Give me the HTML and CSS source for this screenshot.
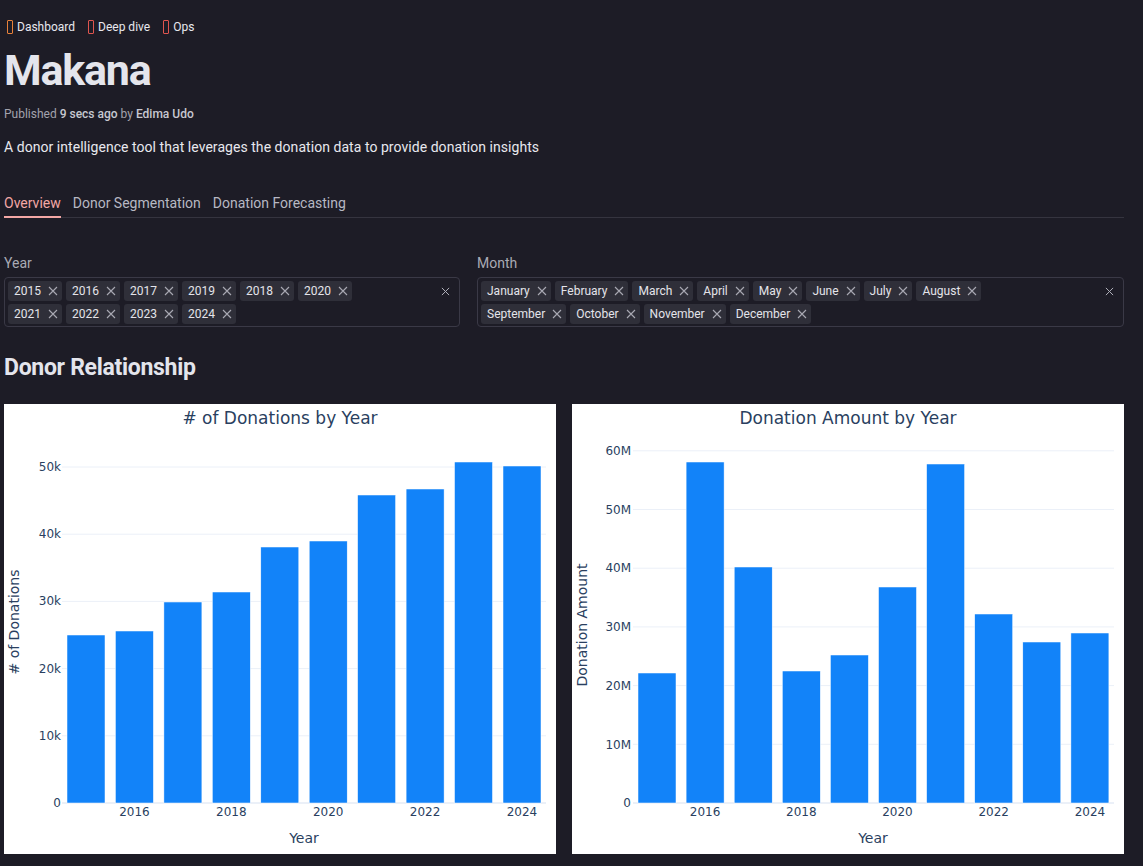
FILE: index.html
```html
<!DOCTYPE html>
<html lang="en">
<head>
<meta charset="utf-8">
<title>Makana</title>
<link rel="stylesheet" href="styles.css">
</head>
<body>
<div class="page">
  <nav class="nav">
    <a class="nav-link"><span class="glyph glyph-orange"></span>Dashboard</a>
    <a class="nav-link"><span class="glyph glyph-red"></span>Deep dive</a>
    <a class="nav-link"><span class="glyph glyph-red"></span>Ops</a>
  </nav>

  <h1 class="title">Makana</h1>
  <p class="meta">Published <b>9 secs ago</b> by <b>Edima Udo</b></p>
  <p class="desc">A donor intelligence tool that leverages the donation data to provide donation insights</p>

  <div class="tabs">
    <span class="tab tab-active">Overview</span>
    <span class="tab">Donor Segmentation</span>
    <span class="tab">Donation Forecasting</span>
  </div>

  <div class="filters">
    <div class="field field-year">
      <div class="label">Year</div>
      <div class="select">
        <div class="tags">
          <span class="tag">2015<svg class="x" viewBox="0 0 10 10"><path d="M1 1L9 9M9 1L1 9"/></svg></span>
          <span class="tag">2016<svg class="x" viewBox="0 0 10 10"><path d="M1 1L9 9M9 1L1 9"/></svg></span>
          <span class="tag">2017<svg class="x" viewBox="0 0 10 10"><path d="M1 1L9 9M9 1L1 9"/></svg></span>
          <span class="tag">2019<svg class="x" viewBox="0 0 10 10"><path d="M1 1L9 9M9 1L1 9"/></svg></span>
          <span class="tag">2018<svg class="x" viewBox="0 0 10 10"><path d="M1 1L9 9M9 1L1 9"/></svg></span>
          <span class="tag">2020<svg class="x" viewBox="0 0 10 10"><path d="M1 1L9 9M9 1L1 9"/></svg></span>
          <span class="tag">2021<svg class="x" viewBox="0 0 10 10"><path d="M1 1L9 9M9 1L1 9"/></svg></span>
          <span class="tag">2022<svg class="x" viewBox="0 0 10 10"><path d="M1 1L9 9M9 1L1 9"/></svg></span>
          <span class="tag">2023<svg class="x" viewBox="0 0 10 10"><path d="M1 1L9 9M9 1L1 9"/></svg></span>
          <span class="tag">2024<svg class="x" viewBox="0 0 10 10"><path d="M1 1L9 9M9 1L1 9"/></svg></span>
        </div>
        <svg class="clear" viewBox="0 0 10 10"><path d="M1 1L9 9M9 1L1 9"/></svg>
      </div>
    </div>
    <div class="field field-month">
      <div class="label">Month</div>
      <div class="select">
        <div class="tags">
          <span class="tag">January<svg class="x" viewBox="0 0 10 10"><path d="M1 1L9 9M9 1L1 9"/></svg></span>
          <span class="tag">February<svg class="x" viewBox="0 0 10 10"><path d="M1 1L9 9M9 1L1 9"/></svg></span>
          <span class="tag">March<svg class="x" viewBox="0 0 10 10"><path d="M1 1L9 9M9 1L1 9"/></svg></span>
          <span class="tag">April<svg class="x" viewBox="0 0 10 10"><path d="M1 1L9 9M9 1L1 9"/></svg></span>
          <span class="tag">May<svg class="x" viewBox="0 0 10 10"><path d="M1 1L9 9M9 1L1 9"/></svg></span>
          <span class="tag">June<svg class="x" viewBox="0 0 10 10"><path d="M1 1L9 9M9 1L1 9"/></svg></span>
          <span class="tag">July<svg class="x" viewBox="0 0 10 10"><path d="M1 1L9 9M9 1L1 9"/></svg></span>
          <span class="tag">August<svg class="x" viewBox="0 0 10 10"><path d="M1 1L9 9M9 1L1 9"/></svg></span>
          <span class="tag">September<svg class="x" viewBox="0 0 10 10"><path d="M1 1L9 9M9 1L1 9"/></svg></span>
          <span class="tag">October<svg class="x" viewBox="0 0 10 10"><path d="M1 1L9 9M9 1L1 9"/></svg></span>
          <span class="tag">November<svg class="x" viewBox="0 0 10 10"><path d="M1 1L9 9M9 1L1 9"/></svg></span>
          <span class="tag">December<svg class="x" viewBox="0 0 10 10"><path d="M1 1L9 9M9 1L1 9"/></svg></span>
        </div>
        <svg class="clear" viewBox="0 0 10 10"><path d="M1 1L9 9M9 1L1 9"/></svg>
      </div>
    </div>
  </div>

  <h2 class="section">Donor Relationship</h2>

  <div class="charts">
    <div class="chart">
      <svg class="plot" viewBox="0 0 552 450" width="552" height="450">
        <text class="ctitle" x="276" y="20" text-anchor="middle"># of Donations by Year</text>
        <g class="grid">
          <line x1="58" x2="542" y1="331.8" y2="331.8"/>
          <line x1="58" x2="542" y1="264.6" y2="264.6"/>
          <line x1="58" x2="542" y1="197.4" y2="197.4"/>
          <line x1="58" x2="542" y1="130.2" y2="130.2"/>
          <line x1="58" x2="542" y1="63" y2="63"/>
        </g>
        <line class="zero" x1="58" x2="542" y1="399" y2="399"/>
        <g class="bars">
          <rect x="63" y="231" width="38" height="168"/>
          <rect x="111.4" y="227" width="38" height="172"/>
          <rect x="159.9" y="198" width="38" height="201"/>
          <rect x="208.3" y="188" width="38" height="211"/>
          <rect x="256.8" y="143" width="38" height="256"/>
          <rect x="305.2" y="137" width="38" height="262"/>
          <rect x="353.6" y="91" width="38" height="308"/>
          <rect x="402.1" y="85" width="38" height="314"/>
          <rect x="450.5" y="58" width="38" height="341"/>
          <rect x="499" y="62" width="38" height="337"/>
        </g>
        <g class="ytick" text-anchor="end">
          <text x="57" y="403">0</text>
          <text x="57" y="336">10k</text>
          <text x="57" y="269">20k</text>
          <text x="57" y="201">30k</text>
          <text x="57" y="134">40k</text>
          <text x="57" y="67">50k</text>
        </g>
        <g class="xtick" text-anchor="middle">
          <text x="130.4" y="412">2016</text>
          <text x="227.3" y="412">2018</text>
          <text x="324.2" y="412">2020</text>
          <text x="421.1" y="412">2022</text>
          <text x="518" y="412">2024</text>
        </g>
        <text class="atitle" x="300" y="439" text-anchor="middle">Year</text>
        <text class="atitle" x="0" y="0" text-anchor="middle" transform="translate(15 218) rotate(-90)"># of Donations</text>
      </svg>
    </div>
    <div class="chart">
      <svg class="plot" viewBox="0 0 552 450" width="552" height="450">
        <text class="ctitle" x="276" y="20" text-anchor="middle">Donation Amount by Year</text>
        <g class="grid">
          <line x1="61" x2="542" y1="340.3" y2="340.3"/>
          <line x1="61" x2="542" y1="281.6" y2="281.6"/>
          <line x1="61" x2="542" y1="222.9" y2="222.9"/>
          <line x1="61" x2="542" y1="164.2" y2="164.2"/>
          <line x1="61" x2="542" y1="105.5" y2="105.5"/>
          <line x1="61" x2="542" y1="46.8" y2="46.8"/>
        </g>
        <line class="zero" x1="61" x2="542" y1="399" y2="399"/>
        <g class="bars">
          <rect x="66" y="269" width="38" height="130"/>
          <rect x="114.1" y="58" width="38" height="341"/>
          <rect x="162.2" y="163" width="38" height="236"/>
          <rect x="210.3" y="267" width="38" height="132"/>
          <rect x="258.4" y="251" width="38" height="148"/>
          <rect x="306.5" y="183" width="38" height="216"/>
          <rect x="354.6" y="60" width="38" height="339"/>
          <rect x="402.7" y="210" width="38" height="189"/>
          <rect x="450.8" y="238" width="38" height="161"/>
          <rect x="498.9" y="229" width="38" height="170"/>
        </g>
        <g class="ytick" text-anchor="end">
          <text x="59" y="403">0</text>
          <text x="59" y="345">10M</text>
          <text x="59" y="286">20M</text>
          <text x="59" y="227">30M</text>
          <text x="59" y="168">40M</text>
          <text x="59" y="110">50M</text>
          <text x="59" y="51">60M</text>
        </g>
        <g class="xtick" text-anchor="middle">
          <text x="133.1" y="412">2016</text>
          <text x="229.3" y="412">2018</text>
          <text x="325.5" y="412">2020</text>
          <text x="421.7" y="412">2022</text>
          <text x="517.9" y="412">2024</text>
        </g>
        <text class="atitle" x="301" y="439" text-anchor="middle">Year</text>
        <text class="atitle" x="0" y="0" text-anchor="middle" transform="translate(15 221) rotate(-90)">Donation Amount</text>
      </svg>
    </div>
  </div>
</div>
</body>
</html>
```

FILE: styles.css
```css
html, body {
  margin: 0;
  padding: 0;
  background: #1d1c26;
}

body {
  font-family: Roboto, "Liberation Sans", sans-serif;
  color: #e6e6ec;
  width: 1143px;
  height: 866px;
  overflow: hidden;
}

.page {
  padding: 19px 19px 0 4px;
}

.nav {
  display: flex;
  gap: 13px;
  height: 16px;
  font-size: 12px;
  line-height: 16px;
  padding-left: 3px;
}

.nav-link {
  display: flex;
  align-items: center;
  gap: 4px;
  color: #e8e8ee;
}

.glyph {
  display: inline-block;
  width: 4px;
  height: 12px;
  border: 1px solid #e0554f;
  border-radius: 1px;
}

.glyph-orange {
  border-color: #e8813a;
}

.title {
  margin: 9px 0 0;
  font-size: 43px;
  line-height: 52px;
  font-weight: 700;
  letter-spacing: -1.2px;
  color: #e4e5ec;
}

.meta {
  margin: 9px 0 0;
  font-size: 12px;
  line-height: 18px;
  color: #a3a3ad;
}

.meta b {
  font-weight: 500;
  color: #c7c8d0;
}

.desc {
  margin: 14px 0 0;
  font-size: 14px;
  line-height: 20px;
  color: #e8e8ee;
  letter-spacing: 0.05px;
}

.tabs {
  margin-top: 36px;
  display: flex;
  gap: 12px;
  border-bottom: 1px solid #35343f;
}

.tab {
  font-size: 14px;
  line-height: 20px;
  padding-bottom: 3px;
  color: #b7b8c3;
  border-bottom: 2px solid transparent;
  margin-bottom: -1px;
}

.tab-active {
  color: #f3a7a5;
  border-bottom-color: #f3a7a5;
}

.filters {
  margin-top: 35px;
  display: grid;
  grid-template-columns: 456px 647px;
  column-gap: 17px;
}

.label {
  font-size: 14px;
  line-height: 20px;
  color: #a9aab4;
  margin-bottom: 4px;
}

.select {
  display: flex;
  align-items: flex-start;
  border: 1px solid #3a3946;
  border-radius: 4px;
  padding: 3px 3px 2px;
}

.tags {
  flex: 1;
  display: flex;
  flex-wrap: wrap;
  gap: 3px 4px;
  margin-right: 46px;
}

.tag {
  display: inline-flex;
  align-items: center;
  height: 20px;
  padding: 0 4px 0 6px;
  gap: 7px;
  background: #2f2f39;
  border-radius: 3px;
  font-size: 12px;
  color: #e4e4ea;
}

.x {
  width: 10px;
  height: 10px;
  stroke: #a9a9b3;
  stroke-width: 1.1;
  fill: none;
}

.clear {
  width: 9px;
  height: 9px;
  margin: 6px 6px 0 0;
  stroke: #b0b0ba;
  stroke-width: 1.1;
  fill: none;
}

.section {
  margin: 25px 0 0;
  font-size: 23px;
  line-height: 32px;
  font-weight: 700;
  letter-spacing: -0.3px;
  color: #e4e5ec;
}

.charts {
  margin-top: 20px;
  display: grid;
  grid-template-columns: 552px 552px;
  column-gap: 16px;
}

.chart {
  background: #ffffff;
  height: 450px;
}

.plot {
  display: block;
  font-family: "DejaVu Sans", Verdana, sans-serif;
}

.ctitle {
  font-size: 17px;
  fill: #2a3f5f;
}

.grid line {
  stroke: #ebf0f8;
  stroke-width: 1;
}

.zero {
  stroke: #ebf0f8;
  stroke-width: 2;
}

.bars rect {
  fill: #1283f9;
  stroke: #ffffff;
  stroke-width: 0.5;
}

.ytick text,
.xtick text {
  font-size: 12px;
  fill: #2a3f5f;
}

.atitle {
  font-size: 14px;
  fill: #2a3f5f;
}
```
